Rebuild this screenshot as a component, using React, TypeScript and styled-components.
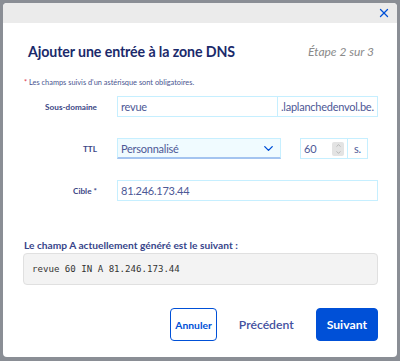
import { createGlobalStyle, styled } from 'styled-components';
import { X, ChevronDown, ChevronUp } from 'lucide-react';

const GlobalStyle = createGlobalStyle`
	html, body {
		margin: 0;
		padding: 0;
		background: #8a8e95;
		font-family: 'Lato', 'Noto Sans', sans-serif;
	}
	* {
		box-sizing: border-box;
	}
`;

const Overlay = styled.div`
	width: 400px;
	height: 361px;
	padding: 3px 3px 4px 3px;
`;

const Modal = styled.div`
	height: 100%;
	display: flex;
	flex-direction: column;

	background: white;
	border-radius: 4px;
	overflow: hidden;
`;

const TopBar = styled.div`
	height: 20px;
	flex-shrink: 0;
	display: flex;
	justify-content: flex-end;
	align-items: center;
	padding-right: 6px;

	background: #ebebeb;

	& > svg {
		color: #0050d7;
		cursor: pointer;
	}
`;

const Body = styled.div`
	display: flex;
	flex-direction: column;
	padding: 17px 19px 0 20px;
`;

const Header = styled.div`
	display: flex;
	justify-content: space-between;
	align-items: center;
	padding: 0 4px 0 5px;
	height: 22px;
`;

const Title = styled.h2`
	margin: 0;
	font-size: 14.2px;
	font-weight: 700;
	color: #1b2a6b;
	letter-spacing: -0.1px;
`;

const Step = styled.span`
	font-size: 12px;
	font-style: italic;
	color: #8a8a8a;
`;

const Note = styled.p`
	margin: 16px 0 0 1px;
	font-size: 7.4px;
	color: #4a5590;

	& > span {
		color: #e0314b;
	}
`;

const Form = styled.div`
	display: grid;
	grid-template-columns: 74px 1fr;
	column-gap: 20px;
	row-gap: 21px;
	align-items: center;
	margin-top: 9px;
`;

const Label = styled.label`
	text-align: right;
	font-size: 8.2px;
	font-weight: 700;
	color: #3b4685;
`;

const Field = styled.div`
	display: flex;
	height: 21px;
	font-size: 11px;
	letter-spacing: -0.25px;
	color: #4d5896;
`;

const TextBox = styled.div<{ $grow?: boolean; $width?: number }>`
	${(p) => (p.$grow ? 'flex: 1;' : '')}
	${(p) => (p.$width ? `width: ${p.$width}px;` : '')}
	display: flex;
	align-items: center;
	padding: 0 3px;
	border: 1px solid #c6efff;
	margin-left: -1px;
	&:first-child {
		margin-left: 0;
	}
	background: white;
`;

const Select = styled.div`
	width: 164px;
	display: flex;
	align-items: center;
	justify-content: space-between;
	padding: 0 4px 0 3px;
	border: 1px solid #c6efff;
	border-bottom: 2px solid #a4c4f0;
	background: #f0fbff;

	& > svg {
		color: #0050d7;
	}
`;

const NumberBox = styled.div`
	margin-left: 19px;
	width: 48px;
	display: flex;
	align-items: center;
	justify-content: space-between;
	padding: 0 3px 0 3px;
	border: 1px solid #c6efff;
`;

const Spinner = styled.span`
	width: 12px;
	height: 14px;
	display: flex;
	flex-direction: column;
	align-items: center;
	justify-content: center;
	background: #e3e3e3;
	border-radius: 2px;
	color: #999;
`;

const Unit = styled.div`
	width: 21px;
	margin-left: -1px;
	display: flex;
	align-items: center;
	justify-content: center;
	border: 1px solid #c6efff;
`;

const SectionTitle = styled.h3`
	margin: 38px 0 0 1px;
	font-size: 10.2px;
	font-weight: 700;
	color: #37448a;
`;

const Code = styled.pre`
	margin: 2px 0 0 0;
	height: 32px;
	display: flex;
	align-items: center;
	padding: 0 8px;
	background: #f3f3f3;
	border: 1px solid #e0e0e0;
	border-radius: 4px;
	font-family: 'DejaVu Sans Mono', 'Liberation Mono', monospace;
	font-size: 9.1px;
	color: #333;
`;

const Actions = styled.div`
	display: flex;
	justify-content: flex-end;
	align-items: center;
	gap: 22px;
	margin-top: 23px;
`;

const Button = styled.button<{ $variant: 'primary' | 'outline' | 'ghost' }>`
	height: 33px;
	padding: 0 ${(p) => (p.$variant === 'outline' ? '4px' : p.$variant === 'primary' ? '10px' : '0')};
	min-width: ${(p) => (p.$variant === 'outline' ? '46px' : p.$variant === 'primary' ? '60px' : '0')};
	border-radius: 4px;
	font-family: inherit;
	font-weight: 700;
	font-size: ${(p) => (p.$variant === 'outline' ? '10.3px' : '12.2px')};
	cursor: pointer;

	border: ${(p) => (p.$variant === 'ghost' ? 'none' : '1px solid #0050d7')};
	background: ${(p) => (p.$variant === 'primary' ? '#0050d7' : 'white')};
	color: ${(p) => (p.$variant === 'primary' ? 'white' : p.$variant === 'outline' ? '#0050d7' : '#4350a0')};
	${(p) => (p.$variant === 'ghost' ? 'font-weight: 600;' : '')}
`;

export default function App() {
	return (
		<>
			<GlobalStyle />
			<Overlay>
				<Modal>
					<TopBar>
						<X size={14} strokeWidth={2.2} />
					</TopBar>
					<Body>
						<Header>
							<Title>Ajouter une entrée à la zone DNS</Title>
							<Step>Étape 2 sur 3</Step>
						</Header>
						<Note>
							<span>*</span> Les champs suivis d'un astérisque sont obligatoires.
						</Note>
						<Form>
							<Label>Sous-domaine</Label>
							<Field>
								<TextBox $grow>revue</TextBox>
								<TextBox $width={101}>.laplanchedenvol.be.</TextBox>
							</Field>
							<Label>TTL</Label>
							<Field>
								<Select>
									Personnalisé
									<ChevronDown size={15} strokeWidth={2.2} />
								</Select>
								<NumberBox>
									60
									<Spinner>
										<ChevronUp size={7} strokeWidth={2} />
										<ChevronDown size={7} strokeWidth={2} />
									</Spinner>
								</NumberBox>
								<Unit>s.</Unit>
							</Field>
							<Label>Cible *</Label>
							<Field>
								<TextBox $grow>81.246.173.44</TextBox>
							</Field>
						</Form>
						<SectionTitle>Le champ A actuellement généré est le suivant :</SectionTitle>
						<Code>revue 60 IN A 81.246.173.44</Code>
						<Actions>
							<Button $variant="outline">Annuler</Button>
							<Button $variant="ghost">Précédent</Button>
							<Button $variant="primary">Suivant</Button>
						</Actions>
					</Body>
				</Modal>
			</Overlay>
		</>
	);
}
